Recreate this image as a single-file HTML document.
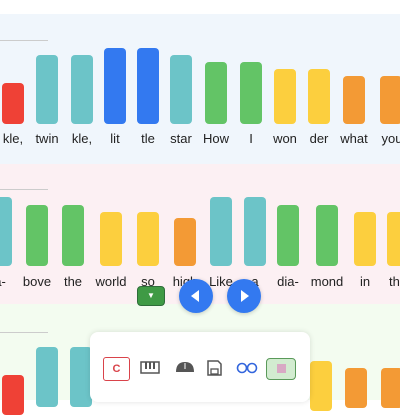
<!DOCTYPE html><html><head><style>
body{margin:0;width:400px;height:400px;overflow:hidden;background:#fff;font-family:"Liberation Sans",sans-serif;position:relative}
.s{position:absolute;left:0;width:400px}
.b{position:absolute;width:22px;border-radius:4px}
.l{position:absolute;width:40px;text-align:center;font-size:13px;color:#222}
.ln{position:absolute;left:0;width:48px;height:1px;background:#ccc}
.R{background:#ef4136}.T{background:#6cc4c8}.B{background:#3379f0}.G{background:#63c466}.Y{background:#fccf3e}.O{background:#f39a35}
</style></head><body>
<div class="s" style="top:14px;height:150px;background:#f0f6fc"></div>
<div class="s" style="top:164px;height:140px;background:#fcf0f3"></div>
<div class="s" style="top:304px;height:96px;background:#f3fcf0"></div>
<div class="ln" style="top:40px"></div><div class="ln" style="top:189px"></div><div class="ln" style="top:332px"></div>

<div class="b R" style="left:2px;top:83px;height:41px"></div>
<div class="b T" style="left:36px;top:55px;height:69px"></div>
<div class="b T" style="left:71px;top:55px;height:69px"></div>
<div class="b B" style="left:104px;top:48px;height:76px"></div>
<div class="b B" style="left:137px;top:48px;height:76px"></div>
<div class="b T" style="left:170px;top:55px;height:69px"></div>
<div class="b G" style="left:205px;top:62px;height:62px"></div>
<div class="b G" style="left:240px;top:62px;height:62px"></div>
<div class="b Y" style="left:274px;top:69px;height:55px"></div>
<div class="b Y" style="left:308px;top:69px;height:55px"></div>
<div class="b O" style="left:343px;top:76px;height:48px"></div>
<div class="b O" style="left:380px;top:76px;height:48px"></div>
<div class="l" style="left:-7px;top:131px">kle,</div>
<div class="l" style="left:27px;top:131px">twin</div>
<div class="l" style="left:62px;top:131px">kle,</div>
<div class="l" style="left:95px;top:131px">lit</div>
<div class="l" style="left:128px;top:131px">tle</div>
<div class="l" style="left:161px;top:131px">star</div>
<div class="l" style="left:196px;top:131px">How</div>
<div class="l" style="left:231px;top:131px">I</div>
<div class="l" style="left:265px;top:131px">won</div>
<div class="l" style="left:299px;top:131px">der</div>
<div class="l" style="left:334px;top:131px">what</div>
<div class="l" style="left:372px;top:131px">you</div>

<div class="b T" style="left:-10px;top:197px;height:69px"></div>
<div class="b G" style="left:26px;top:205px;height:61px"></div>
<div class="b G" style="left:62px;top:205px;height:61px"></div>
<div class="b Y" style="left:100px;top:212px;height:54px"></div>
<div class="b Y" style="left:137px;top:212px;height:54px"></div>
<div class="b O" style="left:174px;top:218px;height:48px"></div>
<div class="b T" style="left:210px;top:197px;height:69px"></div>
<div class="b T" style="left:244px;top:197px;height:69px"></div>
<div class="b G" style="left:277px;top:205px;height:61px"></div>
<div class="b G" style="left:316px;top:205px;height:61px"></div>
<div class="b Y" style="left:354px;top:212px;height:54px"></div>
<div class="b Y" style="left:387px;top:212px;height:54px"></div>
<div class="l" style="left:-20px;top:274px">a-</div>
<div class="l" style="left:17px;top:274px">bove</div>
<div class="l" style="left:53px;top:274px">the</div>
<div class="l" style="left:91px;top:274px">world</div>
<div class="l" style="left:128px;top:274px">so</div>
<div class="l" style="left:165px;top:274px">high</div>
<div class="l" style="left:201px;top:274px">Like</div>
<div class="l" style="left:235px;top:274px">a</div>
<div class="l" style="left:268px;top:274px">dia-</div>
<div class="l" style="left:307px;top:274px">mond</div>
<div class="l" style="left:345px;top:274px">in</div>
<div class="l" style="left:378px;top:274px">the</div>

<div class="b R" style="left:2px;top:375px;height:40px"></div>
<div class="b T" style="left:36px;top:347px;height:60px"></div>
<div class="b T" style="left:70px;top:347px;height:60px"></div>
<div class="b Y" style="left:310px;top:361px;height:50px"></div>
<div class="b O" style="left:345px;top:368px;height:40px"></div>
<div class="b O" style="left:381px;top:368px;height:40px"></div>

<div style="position:absolute;left:137px;top:286px;width:26px;height:18px;background:#3f9a45;border:1px solid #2f6d3a;border-radius:4px;color:#fff;font-size:8px;text-align:center;line-height:18px">▼</div>
<div style="position:absolute;left:179px;top:279px;width:34px;height:34px;border-radius:50%;background:#3379f0;box-shadow:0 1px 4px rgba(0,0,0,.2)"><svg width="34" height="34"><path d="M20 11 L12 17 L20 23Z" fill="#fff"/></svg></div>
<div style="position:absolute;left:227px;top:279px;width:34px;height:34px;border-radius:50%;background:#3379f0;box-shadow:0 1px 4px rgba(0,0,0,.2)"><svg width="34" height="34"><path d="M14 11 L22 17 L14 23Z" fill="#fff"/></svg></div>

<div style="position:absolute;left:90px;top:332px;width:220px;height:70px;background:#fff;border-radius:8px;box-shadow:0 0 6px rgba(0,0,0,.12)"></div>
<div style="position:absolute;left:103px;top:357px;width:25px;height:22px;border:1.5px solid #d9434a;border-radius:3px;color:#d9434a;font-size:11px;font-weight:bold;text-align:center;line-height:22px">C</div>
<svg style="position:absolute;left:140px;top:361px" width="20" height="14"><rect x="1" y="1" width="18" height="11" fill="none" stroke="#555" stroke-width="1.5"/><path d="M6 1v7M10 1v7M14 1v7" stroke="#555" stroke-width="2"/></svg>
<svg style="position:absolute;left:174px;top:360px" width="22" height="14"><path d="M2 12 Q2 2 11 2 Q20 2 20 12Z" fill="#555"/><path d="M11 3v6" stroke="#fff" stroke-width="1"/></svg>
<svg style="position:absolute;left:207px;top:360px" width="15" height="16"><path d="M1 1h10l3 3v11H1z" fill="none" stroke="#555" stroke-width="1.5"/><rect x="4" y="9" width="7" height="5" fill="none" stroke="#555" stroke-width="1.3"/></svg>
<svg style="position:absolute;left:236px;top:361px" width="22" height="14"><circle cx="6" cy="7" r="4.5" fill="none" stroke="#3366dd" stroke-width="1.6"/><circle cx="16" cy="7" r="4.5" fill="none" stroke="#3366dd" stroke-width="1.6"/><path d="M10 7h2" stroke="#3366dd" stroke-width="1.6"/></svg>
<div style="position:absolute;left:266px;top:358px;width:28px;height:20px;background:#d2ecd0;border:1.5px solid #5a9a5a;border-radius:4px"><div style="margin:5px auto;width:9px;height:9px;background:#d8a9c4"></div></div>
</body></html>
